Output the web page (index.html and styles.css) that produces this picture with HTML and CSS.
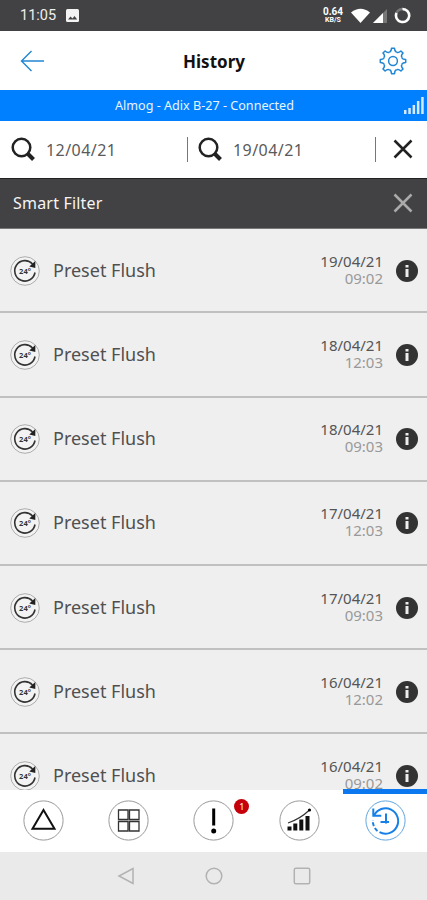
FILE: index.html
```
<!DOCTYPE html>
<html lang="en">
<head>
<meta charset="utf-8">
<title>History</title>
<link rel="stylesheet" href="styles.css">
</head>
<body>
<svg class="defs" width="0" height="0">
  <symbol id="search" viewBox="0 0 24 24"><circle cx="10.5" cy="10.5" r="8.800" fill="none" stroke="#222" stroke-width="2.500"/><path d="M17 17l5.500 5.500" stroke="#222" stroke-width="4"/></symbol>
  <symbol id="cross" viewBox="0 0 20 20"><path d="M1.500 1.500l17 17M18.500 1.500l-17 17" fill="none" stroke="currentColor" stroke-width="2.500"/></symbol>
  <symbol id="flush" viewBox="0 0 30 30"><circle cx="15" cy="15" r="14.300" fill="#f3f3f3" stroke="#a5a5a5" stroke-width=".9"/><path d="M25 16.500A10.200 10.200 0 1 1 22.500 8" fill="none" stroke="#333" stroke-width="1.600"/><path d="M25.300 5v7l-6-1.500z" fill="#222"/><text x="15" y="17.800" text-anchor="middle" class="flush-label">24°</text></symbol>
  <symbol id="info" viewBox="0 0 22 22"><circle cx="11" cy="11" r="11" fill="#333"/><path d="M9.500 5h3v2.600h-3zM9.500 9h3v8h-3z" fill="#eee"/></symbol>
  <symbol id="tooth" viewBox="-14 -14 28 28"><path d="M-3.640-8.780Q-1.600-9.400-1.500-12.700H1.500Q1.600-9.400 3.640-8.780"/></symbol>
</svg>
<div class="screen">
  <div class="status">
    <span class="clock">11:05</span>
    <svg class="photo" width="13" height="13" viewBox="0 0 13 13"><rect width="13" height="13" rx="1.500" fill="#f4f4f4"/><path d="M2 10.500l2.500-3 2 2 2-2.500 2.700 3.500z" fill="#444"/></svg>
    <span class="rate"><b>0.64</b><small>KB/S</small></span>
    <svg class="wifi" width="19" height="15" viewBox="0 0 19 15"><path d="M0 4.500Q9.500-3 19 4.500L9.500 15z" fill="#fff"/></svg>
    <svg class="cell" width="14" height="14" viewBox="0 0 14 14"><path d="M0 14L14 0v14z" fill="#777"/><path d="M0 14L10 4v10z" fill="#fff"/></svg>
    <svg class="battery" width="17" height="17" viewBox="0 0 17 17"><circle cx="8.500" cy="8.500" r="6.600" fill="none" stroke="#777" stroke-width="2.500"/><path d="M8.500 1.900A6.600 6.600 0 1 1 2.500 6" fill="none" stroke="#fff" stroke-width="2.500"/></svg>
  </div>
  <header class="header">
    <svg width="25" height="22" viewBox="0 0 25 22"><path d="M24 11H1.500M11.500 1L1.500 11l10 10" fill="none" stroke="#2186d3" stroke-width="1.400"/></svg>
    <h1>History</h1>
    <svg width="28" height="28" viewBox="-14 -14 28 28" fill="none" stroke="#2186d3" stroke-width="1.500" stroke-linejoin="round">
      <circle r="4.400"/>
      <path id="cog" d="M-3.640-8.780Q-1.600-9.400-1.500-12.700H1.500Q1.600-9.400 3.640-8.780"/>
      <use href="#cog" transform="rotate(45)"/><use href="#cog" transform="rotate(90)"/><use href="#cog" transform="rotate(135)"/><use href="#cog" transform="rotate(180)"/><use href="#cog" transform="rotate(225)"/><use href="#cog" transform="rotate(270)"/><use href="#cog" transform="rotate(315)"/>
    </svg>
  </header>
  <div class="device">
    <span>Almog - Adix B-27 - Connected</span>
    <svg width="20" height="17" viewBox="0 0 20 17" fill="#d5eaff"><path d="M0 13h2.500v4H0zM4.300 11h2.500v6H4.300zM8.600 8h2.500v9H8.600zM12.900 4h2.500v13h-2.500zM17.200 0h2.500v17h-2.500z"/></svg>
  </div>
  <div class="range">
    <div class="field"><svg width="24" height="24"><use href="#search"/></svg><span>12/04/21</span></div>
    <div class="field second"><svg width="24" height="24"><use href="#search"/></svg><span>19/04/21</span></div>
    <svg class="clear" width="20" height="20"><use href="#cross"/></svg>
  </div>
  <div class="filter"><span>Smart Filter</span><svg class="clear" width="20" height="20"><use href="#cross"/></svg></div>
  <main class="list">
    <div class="row"><svg width="30" height="30"><use href="#flush"/></svg><span class="name">Preset Flush</span><div class="when"><span>19/04/21</span><time>09:02</time></div><svg width="22" height="22"><use href="#info"/></svg></div>
    <div class="row"><svg width="30" height="30"><use href="#flush"/></svg><span class="name">Preset Flush</span><div class="when"><span>18/04/21</span><time>12:03</time></div><svg width="22" height="22"><use href="#info"/></svg></div>
    <div class="row"><svg width="30" height="30"><use href="#flush"/></svg><span class="name">Preset Flush</span><div class="when"><span>18/04/21</span><time>09:03</time></div><svg width="22" height="22"><use href="#info"/></svg></div>
    <div class="row"><svg width="30" height="30"><use href="#flush"/></svg><span class="name">Preset Flush</span><div class="when"><span>17/04/21</span><time>12:03</time></div><svg width="22" height="22"><use href="#info"/></svg></div>
    <div class="row"><svg width="30" height="30"><use href="#flush"/></svg><span class="name">Preset Flush</span><div class="when"><span>17/04/21</span><time>09:03</time></div><svg width="22" height="22"><use href="#info"/></svg></div>
    <div class="row"><svg width="30" height="30"><use href="#flush"/></svg><span class="name">Preset Flush</span><div class="when"><span>16/04/21</span><time>12:02</time></div><svg width="22" height="22"><use href="#info"/></svg></div>
    <div class="row"><svg width="30" height="30"><use href="#flush"/></svg><span class="name">Preset Flush</span><div class="when"><span>16/04/21</span><time>09:02</time></div><svg width="22" height="22"><use href="#info"/></svg></div>
  </main>
  <nav class="tabs">
    <div class="tab"><svg width="41" height="41" viewBox="0 0 41 41" fill="none"><circle cx="20.500" cy="20.500" r="19.600" stroke="#999"/><path d="M20.500 10L31.500 28.800h-22z" stroke="#111" stroke-width="2"/></svg></div>
    <div class="tab"><svg width="41" height="41" viewBox="0 0 41 41" fill="none"><circle cx="20.500" cy="20.500" r="19.600" stroke="#999"/><path d="M10.500 10h9.500v9.500h-9.500zM21.500 10H31v9.500h-9.500zM10.500 21.500h9.500V31h-9.500zM21.500 21.500H31V31h-9.500z" stroke="#333" stroke-width="1.300"/></svg></div>
    <div class="tab"><svg width="41" height="41" viewBox="0 0 41 41"><circle cx="20.500" cy="20.500" r="19.600" fill="none" stroke="#999"/><path d="M19.200 8.500h3v17h-3z"/><circle cx="20.700" cy="31" r="2.500"/></svg><span class="badge">1</span></div>
    <div class="tab"><svg width="41" height="41" viewBox="0 0 41 41"><circle cx="20.500" cy="20.500" r="19.600" fill="none" stroke="#999"/><path d="M8.500 26.500h4v4h-4zM14.300 23.500h4v7h-4zM20.300 19.500h4v11h-4zM26.500 16h4v14.500h-4z" fill="#111"/><path d="M9 23Q21 19 30.500 10" fill="none" stroke="#333" stroke-width="1.200"/><circle cx="30.500" cy="10" r="1.600"/></svg></div>
    <div class="tab active"><svg width="41" height="41" viewBox="0 0 41 41" fill="none" stroke="#1680e6"><circle cx="20.500" cy="20.500" r="19.600" stroke="#62a5dd"/><path d="M9 15.500A12.700 12.700 0 1 1 14.500 32.200" stroke-width="2"/><path d="M12.500 31A12.700 12.700 0 0 1 7.900 20" stroke-width="2" stroke-dasharray="4 2"/><path d="M8.300 8.500v7.300h8M21 13.500v10M15.500 22h8.500" stroke-width="2"/></svg></div>
  </nav>
  <div class="system">
    <svg width="18" height="18" viewBox="0 0 18 18"><path d="M16 1.500v15L2 9z"/></svg>
    <svg width="18" height="18" viewBox="0 0 18 18"><circle cx="9" cy="9" r="7.800"/></svg>
    <svg width="18" height="18" viewBox="0 0 18 18"><rect x="1.300" y="1.300" width="15.400" height="15.400" rx="1.500"/></svg>
  </div>
</div>
</body>
</html>
```
FILE: styles.css
```
* { box-sizing: border-box; }
body { margin: 0; font-family: "Noto Sans", "Open Sans", sans-serif; background: #efefef; }
svg { display: block; flex: none; }
.defs { position: absolute; }
.screen { width: 427px; height: 900px; display: flex; flex-direction: column; overflow: hidden; }
.status { height: 31px; flex: none; background: #424244; color: #fff; display: flex; align-items: center; padding: 0 16px 0 20px; }
.clock { font-family: Roboto, sans-serif; font-size: 14.500px; width: 46px; color: #eee; }
.rate { margin-left: auto; width: 20px; display: flex; flex-direction: column; align-items: center; line-height: 8px; font-family: Roboto, sans-serif; }
.rate b { font-size: 10px; }
.rate small { font-size: 7px; font-weight: 700; }
.wifi { margin-left: 8px; }
.cell { margin-left: 3px; }
.battery { margin-left: 7px; }
.header { height: 58.500px; flex: none; background: #fff; display: flex; align-items: center; justify-content: space-between; padding: 1px 20px 0; }
h1 { margin: 0; padding: 2px 0 0 4px; font-size: 17px; line-height: 24px; font-weight: 700; color: #111; }
.device { height: 31px; flex: none; background: #0080fe; color: #e8f4ff; display: flex; align-items: center; padding: 1px 3px 0 115px; justify-content: space-between; font-size: 12.600px; white-space: nowrap; }
.range { height: 57.500px; flex: none; background: #fff; display: flex; align-items: center; padding: 0 14px 0 11px; }
.field { height: 25px; width: 177px; display: flex; align-items: center; gap: 11px; border-right: 1px solid #777; font-size: 16px; letter-spacing: .45px; color: #5a5a5a; }
.field span { padding-top: 1px; }
.second { width: 188px; padding-left: 10px; }
.clear { margin-left: auto; color: #222; }
.filter { height: 50.500px; flex: none; background: #424244; color: #f5f5f5; display: flex; align-items: center; padding: 0 14px 0 13px; font-size: 16px; letter-spacing: .2px; border-top: 1px solid #222; border-bottom: 1px solid #777; }
.filter .clear { color: #aaa; }
.list { height: 561.500px; flex: none; overflow: hidden; background: #efefef; padding-top: .700px; }
.row { height: 84.200px; display: flex; align-items: center; padding: 1px 9px 0 10px; border-bottom: 2px solid #c0c0c0; }
.name { margin: -2px 0 0 13px; font-size: 18px; color: #505050; }
.when { margin: -2px 13px 0 auto; display: flex; flex-direction: column; align-items: flex-end; font-size: 15px; line-height: 17px; color: #555; }
.when time { color: #999; }
.flush-label { font: 700 7.500px "Noto Sans", sans-serif; fill: #333; }
.tabs { height: 62px; flex: none; background: #fff; display: grid; grid-template-columns: repeat(5, 1fr); padding-left: 1px; }
.tab { position: relative; display: flex; justify-content: center; padding-top: 10px; }
.active { padding-left: 2px; }
.active::before { content: ""; position: absolute; top: -1px; left: 1px; right: 0; height: 5px; background: #0c78f0; }
.badge { position: absolute; top: 9px; left: 63px; width: 15px; height: 15px; border-radius: 50%; background: #c5000b; color: #fff; font-size: 9px; line-height: 15px; text-align: center; }
.system { height: 48px; flex: none; background: #eaeaea; display: flex; align-items: center; justify-content: center; gap: 70px; fill: none; stroke: #b2b2b2; stroke-width: 1.500px; }
```
